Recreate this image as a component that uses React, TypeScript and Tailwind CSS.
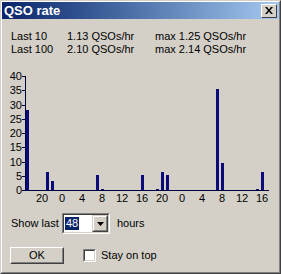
import React from "react";

const bars: [number, number][] = [
    [0, 28.2], [4, 6.3], [5, 3.2], [14, 5.3], [15, 0.4], [23, 5.3], [26, 0.4],
    [27, 6.3], [28, 5.3], [38, 35.4], [39, 9.5], [46, 0.4], [47, 6.3],
];
const xLabels = [20, 0, 4, 8, 12, 16, 20, 0, 4, 8, 12, 16];
const Y0 = 134;
const SCALE = 2.85;

const Chart = () => {
    return <svg width={281} height={150} className="block" fontFamily="'Liberation Sans', Arial, sans-serif" fontSize={11}>
        {[0, 5, 10, 15, 20, 25, 30, 35, 40].map((v) => {
            const ty = Y0 - v * SCALE;
            return <g key={v}>
                <rect x={22} y={Math.round(ty)} width={3} height={1} fill="#000040" />
                <text x={22} y={Math.round(ty) + 4} textAnchor="end" fill="#000">{v}</text>
            </g>
        })}
        {bars.map(([i, v]) => {
            const h = Math.max(1, Math.round(v * SCALE));
            return <rect key={i} x={26 + i * 5} y={Y0 - h} width={3} height={h} fill="#0a0a78" />
        })}
        <rect x={25} y={20} width={1} height={115} fill="#000040" />
        <rect x={25} y={Y0} width={244} height={1} fill="#000040" />
        {xLabels.map((l, k) => {
            const i = 3 + k * 4;
            return <text key={k} x={27 + i * 5} y={146} textAnchor="middle" fill="#000">{l}</text>
        })}
    </svg>
}

const App = () => {
    return <div
        className="w-[281px] h-[274px] bg-[#d4d0c8] border border-t-[#d4d0c8] border-l-[#d4d0c8] border-r-[#404040] border-b-[#404040] text-[11px] text-black overflow-hidden"
        style={{ fontFamily: "'Liberation Sans', Arial, sans-serif" }}
    >
        <div className="h-full border border-t-white border-l-white border-r-[#808080] border-b-[#808080]">
            <div className="h-[17px] flex items-center justify-between pl-[2px] pr-[2px] bg-gradient-to-r from-[#0a246a] to-[#a6caf0]">
                <span className="text-white font-bold text-[13px] leading-none">QSO rate</span>
                <div className="w-[16px] h-[14px] bg-[#d4d0c8] border border-t-white border-l-white border-r-[#404040] border-b-[#404040] flex items-center justify-center">
                    <svg width="8" height="7" viewBox="0 0 8 7">
                        <path d="M0 0h2l2 2.5L6 0h2L5 3.5 8 7H6L4 4.5 2 7H0l3-3.5z" fill="#000" />
                    </svg>
                </div>
            </div>

            <div className="mt-[11px] leading-[13px]">
                <div className="flex pl-[9px]">
                    <span className="w-[56px]">Last 10</span>
                    <span className="w-[88px]">1.13 QSOs/hr</span>
                    <span>max 1.25 QSOs/hr</span>
                </div>
                <div className="flex pl-[9px]">
                    <span className="w-[56px]">Last 100</span>
                    <span className="w-[88px]">2.10 QSOs/hr</span>
                    <span>max 2.14 QSOs/hr</span>
                </div>
            </div>

            <div className="-ml-[2px]">
                <Chart />
            </div>

            <div className="flex items-center mt-[7px] pl-[9px] h-[21px]">
                <span className="w-[51px]">Show last</span>
                <div className="w-[48px] h-[21px] border border-t-[#808080] border-l-[#808080] border-r-white border-b-white">
                    <div className="h-full border border-t-[#404040] border-l-[#404040] border-r-[#d4d0c8] border-b-[#d4d0c8] bg-white flex items-center justify-between">
                        <span className="ml-[1px] px-[1px] bg-[#0a246a] text-white leading-[13px]">48</span>
                        <div className="w-[16px] h-full bg-[#d4d0c8] border border-t-[#d4d0c8] border-l-[#d4d0c8] border-r-[#404040] border-b-[#404040]">
                            <div className="h-full border border-t-white border-l-white border-r-[#808080] border-b-[#808080] flex items-center justify-center">
                                <svg width="7" height="4" viewBox="0 0 7 4">
                                    <path d="M0 0h7L3.5 4z" fill="#000" />
                                </svg>
                            </div>
                        </div>
                    </div>
                </div>
                <span className="ml-[7px]">hours</span>
            </div>

            <div className="flex items-center mt-[13px] pl-[8px]">
                <div className="w-[54px] h-[17px] border border-t-white border-l-white border-r-[#404040] border-b-[#404040]">
                    <div className="h-full border border-t-[#d4d0c8] border-l-[#d4d0c8] border-r-[#808080] border-b-[#808080] flex items-center justify-center leading-none">
                        OK
                    </div>
                </div>
                <div className="ml-[19px] w-[13px] h-[13px] border border-t-[#808080] border-l-[#808080] border-r-white border-b-white">
                    <div className="h-full border border-t-[#404040] border-l-[#404040] border-r-[#d4d0c8] border-b-[#d4d0c8] bg-white" />
                </div>
                <span className="ml-[5px]">Stay on top</span>
            </div>
        </div>
    </div>
}

export default App;
